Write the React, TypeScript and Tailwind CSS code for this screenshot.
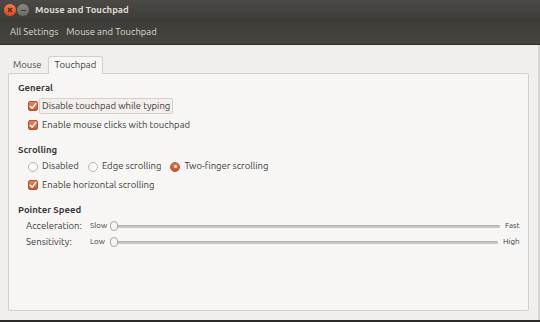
import React from "react";

function Check({ focus, label }: { focus?: boolean; label: string }) {
  return (
    <div className="flex items-center h-[19px] pl-[19px]">
      <div className="w-[10px] h-[10px] rounded-[2px] bg-gradient-to-b from-[#e9825a] to-[#c95a30] border border-[#b5532d] flex items-center justify-center">
        <svg width="8" height="8" viewBox="0 0 8 8">
          <path d="M1.2 4.2 L3.2 6.2 L6.8 1.6" fill="none" stroke="#fff" strokeWidth="1.5" strokeLinecap="round" strokeLinejoin="round" />
        </svg>
      </div>
      <span
        className={
          "ml-[1px] px-[2px] leading-[14px] " +
          (focus ? "border border-[#d9cfc6] rounded-[2px] bg-[#f3efec]" : "border border-transparent")
        }
      >
        {label}
      </span>
    </div>
  );
}

function Radio({ on, label }: { on?: boolean; label: string }) {
  return (
    <div className="flex items-center">
      {on ? (
        <div className="w-[10px] h-[10px] rounded-full bg-gradient-to-b from-[#e47a52] to-[#c4552c] border border-[#b0502b] flex items-center justify-center">
          <div className="w-[3px] h-[3px] rounded-full bg-[#fbe8df]" />
        </div>
      ) : (
        <div className="w-[10px] h-[10px] rounded-full bg-[#fbfbfa] border border-[#b9b6b1]" />
      )}
      <span className="ml-[4px]">{label}</span>
    </div>
  );
}

function Slider({ label, lo, hi, trackW }: { label: string; lo: string; hi: string; trackW: number }) {
  return (
    <div className="flex items-center h-[16px]">
      <div className="w-[81px] pl-[17px] shrink-0">{label}</div>
      <div className="flex items-center">
        <span className="text-[8px] w-[20px]">{lo}</span>
        <div className="relative flex items-center" style={{ width: trackW }}>
          <div className="h-[3px] w-full rounded-full bg-[#c7c5c1] border-t border-[#b3b0ab]" />
          <div className="absolute left-0 w-[8px] h-[10px] rounded-[4px] bg-[#f7f7f6] border border-[#a9a6a1]" />
        </div>
        <span className="text-[8px] ml-[5px]">{hi}</span>
      </div>
    </div>
  );
}

export default function App() {
  return (
    <div className="w-[540px] h-[322px] flex flex-col bg-[#3c3b37] text-[9.5px] text-[#3c3c3c] font-['Ubuntu','Noto_Sans',sans-serif] overflow-hidden">
      {/* title bar */}
      <div className="h-[20px] flex items-center bg-gradient-to-b from-[#4a4945] to-[#3d3c38]">
        <div className="ml-[4px] w-[12px] h-[12px] rounded-full bg-gradient-to-b from-[#f47a4e] to-[#d8491f] flex items-center justify-center">
          <svg width="6" height="6" viewBox="0 0 6 6">
            <path d="M1 1 L5 5 M5 1 L1 5" stroke="#5a2410" strokeWidth="1.3" />
          </svg>
        </div>
        <div className="ml-[1px] w-[12px] h-[12px] rounded-full bg-gradient-to-b from-[#8a8984] to-[#6a6965] flex items-center justify-center">
          <div className="w-[5px] h-[1px] bg-[#3c3b37]" />
        </div>
        <div className="ml-[6px] font-bold text-[#dfdbd2] text-[9.5px]">Mouse and Touchpad</div>
      </div>
      {/* toolbar */}
      <div className="h-[25px] flex items-center gap-[8px] pl-[10px] text-[#dfdbd2] bg-gradient-to-b from-[#3d3c38] to-[#45443f] border-b border-[#2f2e2b]">
        <span>All Settings</span>
        <span>Mouse and Touchpad</span>
      </div>
      {/* content */}
      <div className="flex-1 flex bg-[#3c3b37]">
        <div className="flex-1 flex flex-col bg-[#f0efed] border-r-[2px] border-[#d6d4d0] pl-[8px] pr-[9px] pt-[10px] pb-[9px]">
          {/* tabs */}
          <div className="flex items-end h-[18px] relative z-10">
            <div className="px-[5px] h-[15px] flex items-center text-[#4c4c4c]">Mouse</div>
            <div className="ml-[1px] px-[6px] h-[18px] flex items-center bg-[#f7f6f5] border border-[#d3d0cb] border-b-0 rounded-t-[3px] -mb-px">
              Touchpad
            </div>
          </div>
          <div className="flex-1 bg-[#f7f6f5] border border-[#d3d0cb] rounded-[2px] pl-[9px] pt-[6px]">
            <div className="font-bold h-[16px] flex items-center">General</div>
            <div className="-ml-[9px]">
              <Check focus label="Disable touchpad while typing" />
              <Check label="Enable mouse clicks with touchpad" />
            </div>
            <div className="font-bold h-[16px] flex items-center mt-[8px]">Scrolling</div>
            <div className="flex items-center gap-[9px] pl-[10px] h-[17px]">
              <Radio label="Disabled" />
              <Radio label="Edge scrolling" />
              <Radio on label="Two-finger scrolling" />
            </div>
            <div className="-ml-[9px]">
              <Check label="Enable horizontal scrolling" />
            </div>
            <div className="font-bold h-[16px] flex items-center mt-[8px]">Pointer Speed</div>
            <div className="-ml-[9px]">
              <Slider label="Acceleration:" lo="Slow" hi="Fast" trackW={390} />
              <Slider label="Sensitivity:" lo="Low" hi="High" trackW={388} />
            </div>
          </div>
        </div>
      </div>
      <div className="h-[2px] bg-[#2c2b28]" />
    </div>
  );
}
